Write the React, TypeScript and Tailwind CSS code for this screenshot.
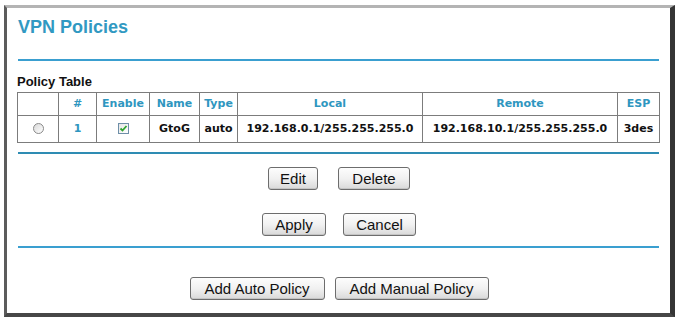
import React from "react";

const Btn = ({ children, w }: { children: React.ReactNode; w: string }) => (
  <button
    className={`h-[23px] ${w} rounded-[3px] border border-[#6d6d6d] bg-gradient-to-b from-[#fdfdfd] via-[#f1f1f1] to-[#d9d9d9] text-[15px] leading-none text-[#111] shadow-[inset_0_-1px_0_#c4c4c4] font-['Liberation_Sans',Arial,sans-serif]`}
  >
    {children}
  </button>
);

export default function App() {
  const th = "border border-[#7c7c7c] text-[#2e96c0] font-bold text-center px-0 py-0";
  const td = "border border-[#7c7c7c] text-[#111] font-bold text-center px-0 py-0";
  return (
    <div className="w-[678px] h-[318px] bg-white pt-[5px] pl-[4px] overflow-hidden">
      <div className="w-[671px] h-[312px] border-l-[3px] border-l-[#5c5c5c] border-t-[3px] border-t-[#b4b4b4] border-r-[5px] border-r-[#353535] border-b-[4px] border-b-[#474747] bg-white flex flex-col pl-[10px] pr-[9px] font-['Liberation_Sans',Arial,sans-serif]">
        <div className="mt-[9px] ml-[1px] h-[21px] text-[18px] leading-[21px] font-bold text-[#3199c2]">
          VPN Policies
        </div>
        <div className="mt-[21px] ml-[1px] h-[2px] w-[641px] bg-[#3a9fd0]" />
        <div className="mt-[13px] h-[15px] text-[13px] leading-[15px] font-bold text-[#111]">
          Policy Table
        </div>
        <table className="mt-[3px] w-[642px] border-collapse table-fixed border border-[#6a6a6a] font-['DejaVu_Sans',Verdana,sans-serif] text-[11px]">
          <colgroup>
            <col className="w-[41px]" />
            <col className="w-[38px]" />
            <col className="w-[53px]" />
            <col className="w-[50px]" />
            <col className="w-[38px]" />
            <col className="w-[185px]" />
            <col className="w-[195px]" />
            <col className="w-[42px]" />
          </colgroup>
          <thead>
            <tr className="h-[23px]">
              <th className={th}></th>
              <th className={th}>#</th>
              <th className={th}>Enable</th>
              <th className={th}>Name</th>
              <th className={th}>Type</th>
              <th className={th}>Local</th>
              <th className={th}>Remote</th>
              <th className={th}>ESP</th>
            </tr>
          </thead>
          <tbody>
            <tr className="h-[27px]">
              <td className={td}>
                <span className="inline-block align-middle w-[11px] h-[11px] rounded-full border border-[#8a8a8a] bg-gradient-to-br from-[#d9d9d9] to-[#ffffff]" />
              </td>
              <td className={`${td} !text-[#2e96c0]`}>1</td>
              <td className={td}>
                <span className="inline-flex align-middle items-center justify-center w-[11px] h-[11px] border border-[#6e8fa8] bg-gradient-to-br from-[#e6e6e6] to-[#ffffff]">
                  <svg width="9" height="9" viewBox="0 0 9 9">
                    <path d="M1.5 4.5 L3.5 6.5 L7.5 2" fill="none" stroke="#2fa52f" strokeWidth="1.8" />
                  </svg>
                </span>
              </td>
              <td className={td}>GtoG</td>
              <td className={td}>auto</td>
              <td className={td}>192.168.0.1/255.255.255.0</td>
              <td className={td}>192.168.10.1/255.255.255.0</td>
              <td className={td}>3des</td>
            </tr>
          </tbody>
        </table>
        <div className="mt-[9px] ml-[1px] h-[2px] w-[641px] bg-[#2e8cb3]" />
        <div className="mt-[13px] flex justify-center gap-[20px]">
          <Btn w="w-[50px]">Edit</Btn>
          <Btn w="w-[72px]">Delete</Btn>
        </div>
        <div className="mt-[23px] flex justify-center gap-[17px]">
          <Btn w="w-[64px]">Apply</Btn>
          <Btn w="w-[73px]">Cancel</Btn>
        </div>
        <div className="mt-[10px] ml-[1px] h-[2px] w-[641px] bg-[#3a9fd0]" />
        <div className="mt-[29px] flex justify-center gap-[10px]">
          <Btn w="w-[135px]">Add Auto Policy</Btn>
          <Btn w="w-[154px]">Add Manual Policy</Btn>
        </div>
      </div>
    </div>
  );
}
